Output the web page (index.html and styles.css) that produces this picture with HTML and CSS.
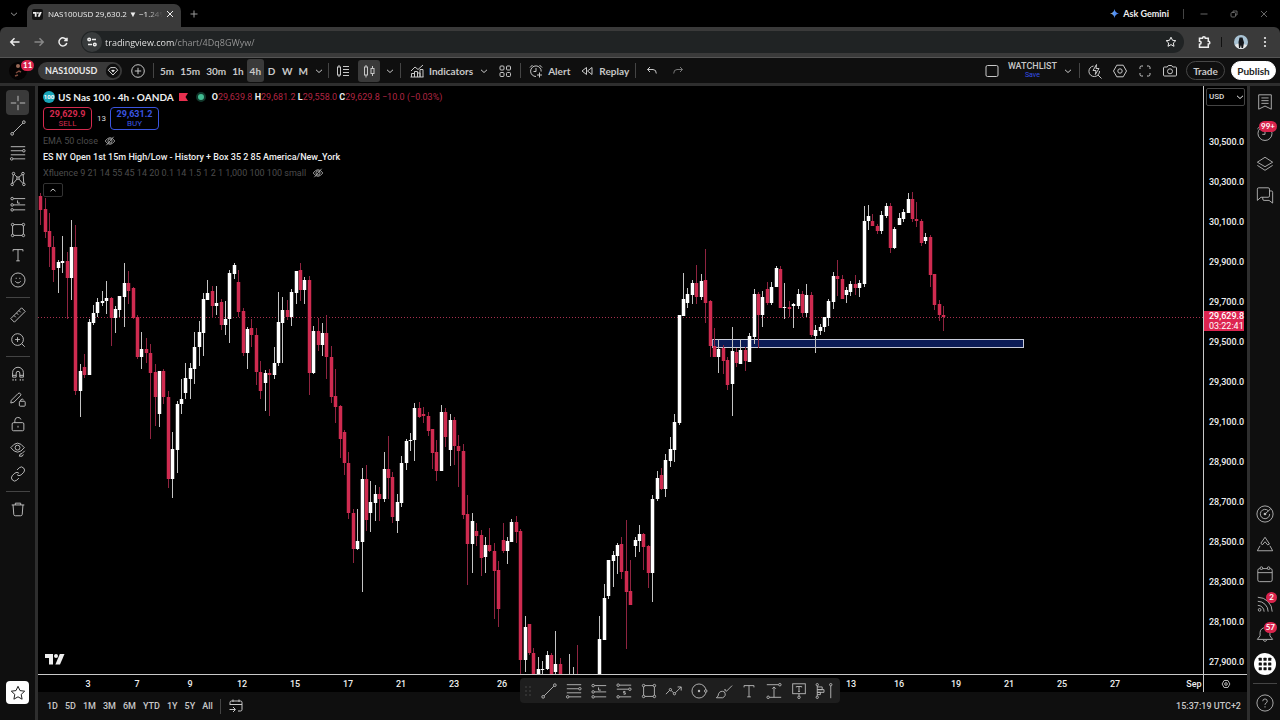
FILE: index.html
```html
<!DOCTYPE html>
<html lang="en">
<head>
    <meta charset="UTF-8">
    <meta name="viewport" content="width=device-width, initial-scale=1.0">
    <title>NAS100USD 29,630.2</title>
    <link rel="stylesheet" href="styles.css">
</head>
<body>
    <!-- Icon set -->
    <svg class="icon-set" aria-hidden="true">
        <symbol id="i-down" viewBox="0 0 10 10"><path d="M2 3.8l3 2.7 3-2.7"/></symbol>
        <symbol id="i-up" viewBox="0 0 10 10"><path d="M2.5 6.2L5 4l2.5 2.2"/></symbol>
        <symbol id="i-close" viewBox="0 0 10 10"><path d="M2 2l6 6M8 2l-6 6"/></symbol>
        <symbol id="i-plus" viewBox="0 0 10 10"><path d="M5 1.5v7M1.5 5h7"/></symbol>
        <symbol id="i-min" viewBox="0 0 10 10"><path d="M1.5 5h7"/></symbol>
        <symbol id="i-max" viewBox="0 0 10 10"><rect x="2" y="3.5" width="4.500" height="4.500" rx="1"/><path d="M4 3.300V2h4v4H6.800"/></symbol>
        <symbol id="i-back" viewBox="0 0 20 20"><path d="M14.500 10H6M9.500 6.300L5.800 10l3.700 3.700"/></symbol>
        <symbol id="i-forward" viewBox="0 0 20 20"><path d="M5.500 10H14M10.500 6.300l3.700 3.700-3.700 3.700"/></symbol>
        <symbol id="i-reload" viewBox="0 0 20 20"><path d="M13.500 8a4 4 0 1 0 .3 3M14 5.800V8.500h-2.800"/></symbol>
        <symbol id="i-tune" viewBox="0 0 20 20"><circle cx="7.200" cy="7.500" r="1.300"/><path d="M10 7.500h4M6 12.500h4"/><circle cx="12.800" cy="12.500" r="1.300"/></symbol>
        <symbol id="i-bookmark" viewBox="0 0 20 20"><path d="M10 5.200l1.500 3.100 3.300.4-2.500 2.300.7 3.300-3-1.700-3 1.700.7-3.300-2.500-2.300 3.300-.4z"/></symbol>
        <symbol id="i-star" viewBox="0 0 20 20"><path d="M10 3.300l2 4.300 4.700.6-3.500 3.200.9 4.800-4.100-2.400-4.100 2.400.9-4.800-3.500-3.200 4.700-.6z"/></symbol>
        <symbol id="i-puzzle" viewBox="0 0 20 20"><path d="M5.500 6.300h3q0-1.600 1.400-1.600t1.400 1.600h3v3q1.500 0 1.500 1.400T14.300 12v3.200H5.500v-3q1.600 0 1.600-1.500T5.500 9.300z"/></symbol>
        <symbol id="i-more" viewBox="0 0 20 20"><g class="solid"><circle cx="10" cy="6" r="1.100"/><circle cx="10" cy="10" r="1.100"/><circle cx="10" cy="14" r="1.100"/></g></symbol>
        <symbol id="i-gem" viewBox="0 0 20 20"><circle class="disc" cx="10" cy="10" r="8"/><path d="M7.300 6.200h5.400l2.500 2.900-5.200 5.400-5.200-5.400z"/><path class="solid" d="M10 11.700L7.900 9.300q1-1.400 2.100-.3 1.100-1.100 2.100.3z"/></symbol>
        <symbol id="i-pluscircle" viewBox="0 0 20 20"><circle cx="10" cy="10" r="6.300"/><path d="M10 6.800v6.400M6.800 10h6.400"/></symbol>
        <symbol id="i-bars" viewBox="0 0 20 20"><rect x="4.500" y="6" width="3" height="8"/><path d="M6 4v2M6 14v2M10 5.500h6M10 8.500h6M10 11.500h6M10 14.500h6"/></symbol>
        <symbol id="i-candles" viewBox="0 0 20 20"><rect x="5.500" y="6" width="3" height="8"/><rect x="12" y="7.500" width="3" height="5"/><path d="M7 4v2M7 14v2.500M13.500 5V7.500M13.500 12.500V15"/></symbol>
        <symbol id="i-indicators" viewBox="0 0 20 20"><path d="M4 10l4-4 3 2.500 5-4.500M4.500 16v-3.500h3V16M7.500 16v-5.500h3V16M10.500 16v-4h2.500V16M13 16V8.500h3V16M3.500 16h13"/></symbol>
        <symbol id="i-layouts" viewBox="0 0 20 20"><rect x="5" y="5" width="4" height="4" rx="1"/><rect x="11.500" y="5" width="4" height="4" rx="1"/><rect x="5" y="11.500" width="4" height="4" rx="1"/><rect x="11.500" y="11.500" width="4" height="4" rx="1"/></symbol>
        <symbol id="i-alarm" viewBox="0 0 20 20"><path d="M15.200 10.500A5.300 5.300 0 1 0 10 15.500M10 7v3.500H7.500M4 6.500l2.500-2.500M13.500 4L16 6.500M13.500 11.500v5M11 14h5"/></symbol>
        <symbol id="i-replay" viewBox="0 0 20 20"><path d="M9.500 6.500v7L5 10zM15 6.500v7L10.500 10z"/></symbol>
        <symbol id="i-undo" viewBox="0 0 20 20"><path d="M8 6L5.500 8.500 8 11M5.500 8.500H11q3.300 0 3.300 4"/></symbol>
        <symbol id="i-redo" viewBox="0 0 20 20"><path d="M12 6l2.500 2.500L12 11M14.500 8.500H9q-3.300 0-3.300 4"/></symbol>
        <symbol id="i-square" viewBox="0 0 20 20"><rect x="4" y="4.500" width="12" height="11" rx="1.500"/></symbol>
        <symbol id="i-quick" viewBox="0 0 20 20"><path d="M8.500 5A5.300 5.300 0 1 0 14.500 10M13 14l3.500 3.500M11.500 3.500L8 9.500h3l-.7 4 3.700-6h-3z"/></symbol>
        <symbol id="i-hex" viewBox="0 0 20 20"><path d="M6.800 4.200h6.400L16.500 10l-3.300 5.800H6.800L3.500 10z"/><circle cx="10" cy="10" r="2.200"/></symbol>
        <symbol id="i-full" viewBox="0 0 20 20"><path d="M5 8V6.500Q5 5 6.500 5H8M12 5h1.500Q15 5 15 6.500V8M15 12v1.500q0 1.500-1.500 1.500H12M8 15H6.500Q5 15 5 13.500V12"/></symbol>
        <symbol id="i-camera" viewBox="0 0 20 20"><path d="M4.500 6h2.800l1-1.500h3.400l1 1.500h2.800q1 0 1 1v7q0 1-1 1h-11q-1 0-1-1V7q0-1 1-1z"/><circle cx="10" cy="10.300" r="2.500"/></symbol>
        <symbol id="i-cross" viewBox="0 0 20 20"><path d="M10 2v6M10 12v6M2 10h6M12 10h6"/></symbol>
        <symbol id="i-line" viewBox="0 0 20 20"><circle cx="3.500" cy="16.500" r="1.500"/><circle cx="16.500" cy="3.500" r="1.500"/><path d="M4.600 15.400L15.400 4.600"/></symbol>
        <symbol id="i-fib" viewBox="0 0 20 20"><path d="M2 3h16M2 7.500h13M2 12h16M4.500 16.500H18"/><circle cx="16.500" cy="7.500" r="1.400"/><circle cx="3" cy="16.500" r="1.400"/></symbol>
        <symbol id="i-pattern" viewBox="0 0 20 20"><circle cx="5" cy="4" r="1.400"/><circle cx="15.500" cy="4" r="1.400"/><circle cx="10" cy="9" r="1.400"/><circle cx="3.500" cy="16" r="1.400"/><circle cx="16.500" cy="16" r="1.400"/><path d="M4.800 5.400L3.700 14.600M15.700 5.400l.7 9.200M6 5l3 3M14.500 5l-3.500 3M4.500 15L9 10M15.500 15L11 10"/></symbol>
        <symbol id="i-long" viewBox="0 0 20 20"><circle cx="3.500" cy="4" r="1.400"/><circle cx="3.500" cy="11" r="1.400"/><circle cx="3.500" cy="16.500" r="1.400"/><path d="M5 4h13M5 11h13M5 16.500h13M9.500 6v3H12"/></symbol>
        <symbol id="i-short" viewBox="0 0 20 20"><circle cx="3.500" cy="3.500" r="1.400"/><circle cx="16.500" cy="8" r="1.400"/><circle cx="3.500" cy="16.500" r="1.400"/><path d="M5 3.500h13M2 8h13M5 16.500h13M11.500 10.500h-2v1.500h2v1.500h-2"/></symbol>
        <symbol id="i-rect" viewBox="0 0 20 20"><circle cx="4" cy="4" r="1.400"/><circle cx="16" cy="4" r="1.400"/><circle cx="4" cy="16" r="1.400"/><circle cx="16" cy="16" r="1.400"/><path d="M5.400 4h9.200M5.400 16h9.200M4 5.400v9.200M16 5.400v9.200"/></symbol>
        <symbol id="i-text" viewBox="0 0 20 20"><path d="M4.500 6V4h11v2M10 4v12.500M8 16.500h4"/></symbol>
        <symbol id="i-smile" viewBox="0 0 20 20"><circle cx="10" cy="10" r="7.800"/><path d="M7 11.500q3 3.500 6 0M8 7.500v1.300M12 7.500v1.300"/></symbol>
        <symbol id="i-ruler" viewBox="0 0 20 20"><path d="M2 14L14 2l4 4L6 18zM5.500 10.500l2 2M8.300 7.700l2 2M11 5l2 2"/></symbol>
        <symbol id="i-zoomin" viewBox="0 0 20 20"><circle cx="9.500" cy="9.500" r="6.500"/><path d="M14.200 14.200l3.300 3.300M9.500 6.800v5.400M6.800 9.500h5.400"/></symbol>
        <symbol id="i-magnet" viewBox="0 0 20 20"><path d="M4 13.500V8.500a6 6 0 0 1 12 0v5h-4V9a2 2 0 0 0-4 0v4.500zM4.500 15.500v2M7.500 15.500v2M12.500 15.500v2M15.500 15.500v2M4 11.500h4M12 11.500h4"/></symbol>
        <symbol id="i-pencil" viewBox="0 0 20 20"><path d="M2.500 11.500L10 4q1.300-1.300 2.600 0t0 2.500L5.500 13.500 2 14.500z"/><rect x="11.500" y="12.500" width="6.500" height="5.500" rx="1"/><path d="M13 12.500v-1.500q1.700-2 3.200 0"/></symbol>
        <symbol id="i-lock" viewBox="0 0 20 20"><rect x="3.500" y="8.500" width="13" height="9" rx="1.500"/><path d="M6.500 8.500V6a3.500 3.500 0 0 1 6.800-1M10 12v2"/></symbol>
        <symbol id="i-eye" viewBox="0 0 20 20"><path d="M2 8.500q7.500-10 15 0-7.500 10-15 0z"/><circle cx="9.500" cy="8.500" r="2.700"/><path d="M11.500 18q0-3 3-3l3-3M11.500 18q4 1 4.500-2"/></symbol>
        <symbol id="i-link" viewBox="0 0 20 20"><path d="M9 5.500l2.500-2.500q2.500-2 4.700.3t.3 4.700l-3 3q-2.500 2-4.700-.3M11 14.500l-2.500 2.500q-2.500 2-4.700-.3t-.3-4.700l3-3q2.500-2 4.700.3"/></symbol>
        <symbol id="i-trash" viewBox="0 0 20 20"><path d="M3 5.500h14M7 5.500v-2h6v2M4.500 5.500l.8 10.500q.2 1.500 1.700 1.500h6q1.500 0 1.700-1.500l.8-10.500"/></symbol>
        <symbol id="i-list" viewBox="0 0 20 20"><path d="M3 2h14v16l-7-3.500L3 18zM6 5.500h8M6 8.500h8M6 11.500h8"/></symbol>
        <symbol id="i-clock" viewBox="0 0 20 20"><circle cx="10" cy="10.500" r="7.800"/><path d="M10 6.500v5H7M1.500 5.500l3-3"/></symbol>
        <symbol id="i-layers" viewBox="0 0 20 20"><path d="M10 2.500L18.500 8 10 13 1.500 8zM1.500 11.500l8.500 5.500 8.500-5.500"/></symbol>
        <symbol id="i-chat" viewBox="0 0 20 20"><path d="M3 2h10.500Q15 2 15 3.500v7.500q0 1.500-1.500 1.500H5.500L1.500 16V3.500Q1.500 2 3 2zM15 5.500h2q1.500 0 1.500 1.500v12L14.500 16H9q-1.500 0-1.500-1.500v-2"/></symbol>
        <symbol id="i-radar" viewBox="0 0 20 20"><circle cx="10" cy="10" r="9"/><path d="M13.800 6.500A5.200 5.200 0 1 0 15.200 10M10 10l6.500-6"/><circle class="solid" cx="10" cy="10" r="1.500"/></symbol>
        <symbol id="i-pine" viewBox="0 0 20 20"><path d="M5.500 9L10 2.500 15 10l-2 1-3-3.500-3 3.500zM4.500 12L1.500 17.500h17L15.500 12"/></symbol>
        <symbol id="i-calendar" viewBox="0 0 20 20"><rect x="2" y="4" width="16" height="14.500" rx="2"/><path d="M2 8.500h16"/><circle class="knob-dark" cx="6" cy="3.500" r="1.500"/><circle class="knob-dark" cx="14" cy="3.500" r="1.500"/></symbol>
        <symbol id="i-feed" viewBox="0 0 20 20"><circle cx="4" cy="16.500" r="1.500"/><path d="M2 11.500a7 7 0 0 1 7 7M2 7A11.500 11.500 0 0 1 13.500 18.500M2 2.500a16 16 0 0 1 16 16"/></symbol>
        <symbol id="i-bell" viewBox="0 0 20 20"><path d="M1.500 16L4.500 12V8.500a5.500 5.500 0 0 1 11 0V12l3 4zM8 17q2 2.500 4 0"/></symbol>
        <symbol id="i-apps" viewBox="0 0 20 20"><g class="solid"><rect x="3" y="3" width="3.500" height="3.500" rx=".5"/><rect x="8.300" y="3" width="3.500" height="3.500" rx=".5"/><rect x="13.500" y="3" width="3.500" height="3.500" rx=".5"/><rect x="3" y="8.300" width="3.500" height="3.500" rx=".5"/><rect x="8.300" y="8.300" width="3.500" height="3.500" rx=".5"/><rect x="13.500" y="8.300" width="3.500" height="3.500" rx=".5"/><rect x="3" y="13.500" width="3.500" height="3.500" rx=".5"/><rect x="8.300" y="13.500" width="3.500" height="3.500" rx=".5"/><rect x="13.500" y="13.500" width="3.500" height="3.500" rx=".5"/></g></symbol>
        <symbol id="i-help" viewBox="0 0 20 20"><circle cx="10" cy="10" r="9"/><path d="M7.500 8q0-2.500 2.500-2.500T12.500 8q0 1.300-1.300 2T10 12M10 13.500v1.500"/></symbol>
        <symbol id="i-hidden" viewBox="0 0 20 20"><path d="M2 10q8-11 16 0-8 11-16 0zM16 3L4 17"/><circle cx="10" cy="10" r="3.500"/></symbol>
        <symbol id="i-goto" viewBox="0 0 20 20"><path d="M4 9V6.500Q4 5 5.500 5h9Q16 5 16 6.500v7q0 1.500-1.500 1.500H12M4 8.500h12M7 3.500V6M13 3.500V6M3.500 13.500H9M7 11l2.500 2.500L7 16"/></symbol>
        <symbol id="i-path" viewBox="0 0 20 20"><circle cx="6" cy="8.500" r="1.300"/><circle cx="10.500" cy="13" r="1.300"/><path d="M1 13.500L5 9.500M7 9.500l2.500 2.500M11.500 12L18 5.500M14 5.500h4v4"/></symbol>
        <symbol id="i-circle" viewBox="0 0 20 20"><circle cx="10" cy="10" r="7.800"/><circle class="solid" cx="10" cy="10" r="1.300"/><circle class="knob" cx="17.500" cy="10" r="1.400"/></symbol>
        <symbol id="i-brush" viewBox="0 0 20 20"><path d="M1.500 17.500q2.500-1.500 2.500-4.500 2-4 6.500-2 2.500 4.500-2 6.500zM11 9.500q-.5-3.500 1.500 1L19 4"/></symbol>
        <symbol id="i-range" viewBox="0 0 20 20"><circle cx="16.500" cy="3" r="1.400"/><circle cx="3.500" cy="17" r="1.400"/><path d="M2 3h13M5 17h13M10 5.500V17M8 7.500l2-2 2 2"/></symbol>
        <symbol id="i-note" viewBox="0 0 20 20"><rect x="3" y="2" width="14" height="11"/><circle cx="10" cy="17" r="1.400"/><path d="M7 6V5h6v1M10 5v5.500M9 10.500h2M10 13v2.500"/></symbol>
        <symbol id="i-volume" viewBox="0 0 20 20"><circle cx="2.500" cy="3" r="1.300"/><circle cx="2.500" cy="17" r="1.300"/><circle cx="17.500" cy="3" r="1.300"/><path d="M2.500 4.300v11.400M2.500 5.500h5.500v3H2.500M2.500 8.500H10v3H2.500M2.500 11.500H6v2.500H2.500M17.500 4.300V18"/></symbol>
        <symbol id="i-grip" viewBox="0 0 10 20"><g class="solid"><circle cx="3" cy="6" r=".7"/><circle cx="7" cy="6" r=".7"/><circle cx="3" cy="10" r=".7"/><circle cx="7" cy="10" r=".7"/><circle cx="3" cy="14" r=".7"/><circle cx="7" cy="14" r=".7"/></g></symbol>
        <symbol id="i-tv" viewBox="0 0 20 11"><g class="solid"><path d="M0 0h8v10.500H4V4H0z"/><circle cx="11" cy="2" r="2"/><path d="M14.800 0h4.700L15 10.500h-4.600z"/></g></symbol>
    </svg>

    <!-- Browser tab strip -->
    <div class="tab-strip">
        <button class="tab-search" aria-label="Search tabs"><svg class="icon-sm"><use href="#i-down"/></svg></button>
        <div class="tab">
            <span class="favicon"><svg><use href="#i-tv"/></svg></span>
            <span class="tab-title">NAS100USD 29,630.2 ▼ −1.24%</span>
            <button aria-label="Close tab"><svg class="icon-sm"><use href="#i-close"/></svg></button>
        </div>
        <button class="new-tab" aria-label="New tab"><svg class="icon-sm"><use href="#i-plus"/></svg></button>
        <div class="window-controls">
            <button class="gemini">
                <svg viewBox="0 0 10 10"><defs><linearGradient id="gem"><stop offset="0" stop-color="#f2b84b"/><stop offset=".35" stop-color="#5b9df5"/><stop offset="1" stop-color="#3f6fe8"/></linearGradient></defs><path fill="url(#gem)" d="M5 0q.6 4.400 5 5-4.400.6-5 5-.6-4.400-5-5 4.400-.6 5-5z"/></svg>
                Ask Gemini
            </button>
            <span class="divider"></span>
            <button aria-label="Minimize"><svg class="icon-sm"><use href="#i-min"/></svg></button>
            <button aria-label="Restore"><svg class="icon-sm"><use href="#i-max"/></svg></button>
            <button aria-label="Close"><svg class="icon-sm"><use href="#i-close"/></svg></button>
        </div>
    </div>

    <!-- Browser address row -->
    <div class="address-row">
        <button aria-label="Back"><svg class="icon bold"><use href="#i-back"/></svg></button>
        <button class="dim" aria-label="Forward"><svg class="icon bold"><use href="#i-forward"/></svg></button>
        <button aria-label="Reload"><svg class="icon bold"><use href="#i-reload"/></svg></button>
        <div class="omnibox">
            <button class="site-info" aria-label="Site information"><svg class="icon bold"><use href="#i-tune"/></svg></button>
            <input type="text" aria-label="Address" value="tradingview.com/chart/4Dq8GWyw/">
            <button aria-label="Bookmark"><svg class="icon"><use href="#i-bookmark"/></svg></button>
        </div>
        <button aria-label="Extensions"><svg class="icon bold"><use href="#i-puzzle"/></svg></button>
        <span class="divider dark"></span>
        <button class="profile" aria-label="Profile"><svg viewBox="0 0 14 14"><circle cx="7" cy="7" r="7" fill="#a9c3d4"/><path d="M1 10q3-3 12 0-2 4-6 4t-6-4z" fill="#e8e8e8"/><path d="M5.500 2.500h3l1.500 5-1 5.500h-1.500L7 10l-1 3H5l-.5-6z" fill="#15181d"/></svg></button>
        <button aria-label="Menu"><svg class="icon"><use href="#i-more"/></svg></button>
    </div>

    <!-- Chart header -->
    <div class="header">
        <button class="avatar" aria-label="Account">
            <svg viewBox="0 0 18 18"><circle cx="9" cy="9" r="9" fill="#050303"/><circle cx="9" cy="4" r="2" fill="#9a6a58"/><path d="M7 11l3-2 2 1M6 14l3-1" stroke="#7d4a3c" stroke-width="1.500" fill="none"/></svg>
            <span class="badge">11</span>
        </button>
        <button class="symbol">NAS100USD <svg class="icon"><use href="#i-gem"/></svg></button>
        <button class="add" aria-label="Compare"><svg class="icon"><use href="#i-pluscircle"/></svg></button>
        <span class="divider"></span>
        <div class="intervals">
            <button>5m</button><button>15m</button><button>30m</button><button>1h</button><button class="active">4h</button><button>D</button><button>W</button><button>M</button>
            <button class="more" aria-label="More intervals"><svg class="icon-sm"><use href="#i-down"/></svg></button>
        </div>
        <span class="divider"></span>
        <button class="bar-style" aria-label="Settings"><svg class="icon"><use href="#i-bars"/></svg></button>
        <button class="candle-type active" aria-label="Candles"><svg class="icon"><use href="#i-candles"/></svg></button>
        <button class="chart-more" aria-label="Chart type"><svg class="icon-sm"><use href="#i-down"/></svg></button>
        <span class="divider"></span>
        <button class="labelled indicators"><svg class="icon"><use href="#i-indicators"/></svg>Indicators</button>
        <button class="indicators-more" aria-label="Favorite indicators"><svg class="icon-sm"><use href="#i-down"/></svg></button>
        <button class="templates" aria-label="Templates"><svg class="icon"><use href="#i-layouts"/></svg></button>
        <span class="divider"></span>
        <button class="labelled"><svg class="icon"><use href="#i-alarm"/></svg>Alert</button>
        <button class="labelled replay"><svg class="icon"><use href="#i-replay"/></svg>Replay</button>
        <span class="divider"></span>
        <button class="step" aria-label="Undo"><svg class="icon"><use href="#i-undo"/></svg></button>
        <button class="step dim" aria-label="Redo"><svg class="icon"><use href="#i-redo"/></svg></button>
        <div class="header-right">
            <button aria-label="Layout"><svg class="icon"><use href="#i-square"/></svg></button>
            <button class="watchlist">WATCHLIST<small>Save</small></button>
            <button class="layout-more" aria-label="Layouts"><svg class="icon-sm"><use href="#i-down"/></svg></button>
            <span class="divider"></span>
            <button class="tool" aria-label="Quick search"><svg class="icon"><use href="#i-quick"/></svg></button>
            <button class="tool" aria-label="Chart settings"><svg class="icon"><use href="#i-hex"/></svg></button>
            <button class="tool" aria-label="Fullscreen"><svg class="icon"><use href="#i-full"/></svg></button>
            <button class="tool" aria-label="Snapshot"><svg class="icon"><use href="#i-camera"/></svg></button>
            <button class="trade">Trade</button>
            <button class="publish">Publish</button>
        </div>
    </div>

    <div class="workspace">
        <!-- Drawing tools -->
        <div class="left-bar">
            <div class="tools tools-draw">
                <button class="active" aria-label="Cross"><svg class="icon"><use href="#i-cross"/></svg></button>
                <button aria-label="Trend line"><svg class="icon"><use href="#i-line"/></svg></button>
                <button aria-label="Fib retracement"><svg class="icon"><use href="#i-fib"/></svg></button>
                <button aria-label="Patterns"><svg class="icon"><use href="#i-pattern"/></svg></button>
                <button aria-label="Long position"><svg class="icon"><use href="#i-long"/></svg></button>
                <button aria-label="Rectangle"><svg class="icon"><use href="#i-rect"/></svg></button>
                <button aria-label="Text"><svg class="icon"><use href="#i-text"/></svg></button>
                <button aria-label="Icons"><svg class="icon"><use href="#i-smile"/></svg></button>
            </div>
            <hr>
            <div class="tools tools-measure">
                <button aria-label="Measure"><svg class="icon"><use href="#i-ruler"/></svg></button>
                <button aria-label="Zoom in"><svg class="icon"><use href="#i-zoomin"/></svg></button>
            </div>
            <hr>
            <div class="tools tools-lock">
                <button aria-label="Magnet"><svg class="icon"><use href="#i-magnet"/></svg></button>
                <button aria-label="Stay in drawing mode"><svg class="icon"><use href="#i-pencil"/></svg></button>
                <button aria-label="Lock drawings"><svg class="icon"><use href="#i-lock"/></svg></button>
                <button aria-label="Hide drawings"><svg class="icon"><use href="#i-eye"/></svg></button>
                <button aria-label="Sync drawings"><svg class="icon"><use href="#i-link"/></svg></button>
            </div>
            <hr>
            <div class="tools tools-trash">
                <button aria-label="Remove"><svg class="icon"><use href="#i-trash"/></svg></button>
            </div>
            <button class="favorites" aria-label="Favorites toolbar"><svg class="icon"><use href="#i-star"/></svg></button>
        </div>

        <div class="center">
            <div class="chart-row">
                <div class="chart">
                    <svg class="plot" id="plot"></svg>
                    <div class="legend">
                        <div class="legend-title">
                            <span class="logo">100</span>
                            <strong>US Nas 100 · 4h · OANDA</strong>
                            <svg class="flag" viewBox="0 0 9 8"><path d="M0 0h9L6.500 4 9 8H0z" fill="#e8304f"/></svg>
                            <span class="market"></span>
                            <span class="ohlc"><b>O</b>29,639.8 <b>H</b>29,681.2 <b>L</b>29,558.0 <b>C</b>29,629.8 −10.0 (−0.03%)</span>
                        </div>
                        <div class="quotes">
                            <button class="sell">29,629.9<small>SELL</small></button>
                            <span>13</span>
                            <button class="buy">29,631.2<small>BUY</small></button>
                        </div>
                        <div class="study off">EMA 50 close <svg class="icon-eye"><use href="#i-hidden"/></svg></div>
                        <div class="study">ES NY Open 1st 15m High/Low - History + Box 35 2 85 America/New_York</div>
                        <div class="study off">Xfluence 9 21 14 55 45 14 20 0.1 14 1.5 1 2 1 1,000 100 100 small <svg class="icon-eye"><use href="#i-hidden"/></svg></div>
                        <button class="collapse" aria-label="Hide legend"><svg class="icon-sm"><use href="#i-up"/></svg></button>
                    </div>
                    <svg class="watermark"><use href="#i-tv"/></svg>
                </div>
                <div class="price-axis">
                    <div class="currency">
                        <select aria-label="Currency"><option>USD</option></select>
                        <svg class="icon-sm"><use href="#i-down"/></svg>
                    </div>
                    <div class="prices">
                        <span>30,500.0</span><span>30,300.0</span><span>30,100.0</span><span>29,900.0</span><span>29,700.0</span><span>29,500.0</span><span>29,300.0</span><span>29,100.0</span><span>28,900.0</span><span>28,700.0</span><span>28,500.0</span><span>28,300.0</span><span>28,100.0</span><span>27,900.0</span>
                    </div>
                    <div class="last-price">29,629.8<span>03:22:41</span></div>
                </div>
            </div>
            <div class="time-row">
                <svg class="time-axis" id="timeAxis"></svg>
                <button class="axis-settings" aria-label="Axis settings"><svg class="icon-eye"><use href="#i-hex"/></svg></button>
            </div>
            <div class="footer">
                <button>1D</button><button>5D</button><button>1M</button><button>3M</button><button>6M</button><button>YTD</button><button>1Y</button><button>5Y</button><button>All</button>
                <span class="divider"></span>
                <button aria-label="Go to date"><svg class="icon"><use href="#i-goto"/></svg></button>
                <button class="clock">15:37:19 UTC+2</button>
            </div>
        </div>

        <!-- Widgets -->
        <div class="right-bar">
            <div class="right-top">
                <button aria-label="Watchlist"><svg class="icon"><use href="#i-list"/></svg></button>
                <button aria-label="Alerts"><svg class="icon"><use href="#i-clock"/></svg><span class="badge">99+</span></button>
                <button aria-label="Object tree"><svg class="icon"><use href="#i-layers"/></svg></button>
                <button aria-label="Chats"><svg class="icon"><use href="#i-chat"/></svg></button>
            </div>
            <div class="right-bottom">
                <button aria-label="Screeners"><svg class="icon"><use href="#i-radar"/></svg></button>
                <button aria-label="Pine"><svg class="icon"><use href="#i-pine"/></svg></button>
                <button aria-label="Calendars"><svg class="icon"><use href="#i-calendar"/></svg></button>
                <button aria-label="Feed"><svg class="icon"><use href="#i-feed"/></svg><span class="badge">2</span></button>
                <button aria-label="Notifications"><svg class="icon"><use href="#i-bell"/></svg><span class="badge">57</span></button>
                <button class="apps" aria-label="Products"><svg class="icon"><use href="#i-apps"/></svg></button>
                <hr>
                <button aria-label="Help"><svg class="icon"><use href="#i-help"/></svg></button>
            </div>
        </div>
    </div>

    <!-- Floating favorites toolbar -->
    <div class="float-bar">
        <svg class="grip"><use href="#i-grip"/></svg>
        <button aria-label="Trend line"><svg class="icon"><use href="#i-line"/></svg></button>
        <button aria-label="Fib retracement"><svg class="icon"><use href="#i-fib"/></svg></button>
        <button aria-label="Long position"><svg class="icon"><use href="#i-long"/></svg></button>
        <button aria-label="Short position"><svg class="icon"><use href="#i-short"/></svg></button>
        <button aria-label="Rectangle"><svg class="icon"><use href="#i-rect"/></svg></button>
        <button aria-label="Path"><svg class="icon"><use href="#i-path"/></svg></button>
        <button aria-label="Circle"><svg class="icon"><use href="#i-circle"/></svg></button>
        <button aria-label="Brush"><svg class="icon"><use href="#i-brush"/></svg></button>
        <button aria-label="Text"><svg class="icon"><use href="#i-text"/></svg></button>
        <button aria-label="Price range"><svg class="icon"><use href="#i-range"/></svg></button>
        <button aria-label="Note"><svg class="icon"><use href="#i-note"/></svg></button>
        <button aria-label="Volume profile"><svg class="icon"><use href="#i-volume"/></svg></button>
    </div>

    <script src="chart.js"></script>
</body>
</html>
```
FILE: styles.css
```css
* {
    box-sizing: border-box;
}
body {
    margin: 0;
    height: 100vh;
    display: flex;
    flex-direction: column;
    overflow: hidden;
    background: #000;
    color: #c8c8c8;
    font-family: Lato, "Open Sans", sans-serif;
    font-size: 10px;
    line-height: 12px;
}
button {
    display: flex;
    align-items: center;
    justify-content: center;
    flex: none;
    padding: 0;
    border: 0;
    background: none;
    color: inherit;
    font: inherit;
    font-weight: 700;
}
hr {
    width: 24px;
    height: 1px;
    margin: 4px auto;
    border: 0;
    background: #444;
}
svg {
    flex: none;
    fill: none;
    stroke: currentColor;
    stroke-width: 1;
}
.icon-set {
    position: absolute;
    width: 0;
    height: 0;
}
.solid {
    fill: currentColor;
    stroke: none;
}
.disc {
    fill: #0f0f0f;
    stroke: none;
}
.knob {
    fill: #1e1e1e;
}
.knob-dark {
    fill: #0f0f0f;
}
.icon {
    width: 20px;
    height: 20px;
}
.icon-sm {
    width: 10px;
    height: 10px;
}
.icon-eye {
    width: 12px;
    height: 12px;
    stroke-width: 1.5;
}
.bold {
    stroke-width: 1.5;
}
.dim {
    color: #777;
}
.divider {
    flex: none;
    width: 1px;
    height: 15px;
    background: #444;
}
.badge {
    position: absolute;
    min-width: 11px;
    height: 11px;
    padding: 0 2px;
    border-radius: 6px;
    background: #d9244c;
    color: #fff;
    font-size: 8px;
    line-height: 11px;
}

/* Browser */
.tab-strip {
    flex: none;
    display: flex;
    align-items: center;
    height: 27px;
}
.tab-search {
    width: 27px;
    color: #999;
}
.tab {
    display: flex;
    align-items: center;
    align-self: flex-end;
    width: 154px;
    height: 23px;
    padding: 0 6px 3px 5px;
    border-radius: 7px 7px 0 0;
    background: #3a3a3a;
    color: #eee;
}
.favicon {
    display: flex;
    align-items: center;
    justify-content: center;
    width: 11px;
    height: 11px;
    margin-right: 5px;
    border-radius: 2px;
    background: #111;
}
.favicon svg {
    width: 9px;
    height: 5px;
}
.tab-title {
    flex: 1;
    overflow: hidden;
    margin-right: 2px;
    white-space: nowrap;
    font-size: 8px;
    font-family: "Open Sans", sans-serif;
    mask-image: linear-gradient(to right, #000 85%, transparent);
}
.new-tab {
    margin-left: 8px;
    color: #999;
}
.window-controls {
    display: flex;
    align-items: center;
    gap: 20px;
    margin-left: auto;
    padding-right: 11px;
    color: #666;
}
.gemini {
    gap: 4px;
    margin-right: -6px;
    color: #eee;
    font-size: 9px;
}
.gemini svg {
    width: 9px;
    height: 9px;
    stroke: none;
}
.window-controls .divider {
    height: 10px;
    margin-right: -5px;
}
.address-row {
    flex: none;
    display: flex;
    align-items: center;
    gap: 4px;
    height: 31px;
    padding: 0 5px;
    background: #3a3a3a;
    border-bottom: 1px solid #555;
    border-radius: 6px 6px 0 0;
    color: #eee;
}
.address-row .dim {
    color: #888;
}
.omnibox {
    flex: 1;
    display: flex;
    align-items: center;
    height: 22px;
    margin: 0 6px 0 4px;
    padding: 0 3px 0 1px;
    border-radius: 11px;
    background: #202324;
}
.omnibox input {
    flex: 1;
    min-width: 0;
    padding: 0;
    border: 0;
    outline: 0;
    background: linear-gradient(to right, #f2f2f2 69px, #999 69px) text;
    color: transparent;
    font-family: "Open Sans", sans-serif;
    font-size: 9px;
}
.site-info {
    margin-right: 3px;
    border-radius: 50%;
    background: #383b3c;
}
.address-row .dark {
    height: 10px;
    margin: 0 5px 0 3px;
    background: #111;
}
.profile svg {
    width: 14px;
    height: 14px;
    stroke: none;
}
.address-row button {
    min-width: 20px;
}

/* Header */
.header {
    flex: none;
    display: flex;
    align-items: center;
    height: 28px;
    padding: 0 4px 0 9px;
    background: #0f0f0f;
    border-bottom: 3px solid #2e2e2e;
}
.avatar {
    position: relative;
    margin-right: 11px;
}
.avatar > svg {
    width: 18px;
    height: 18px;
    stroke: none;
}
.avatar .badge {
    top: -2px;
    left: 12px;
}
.symbol {
    justify-content: space-between;
    width: 84px;
    height: 18px;
    padding-left: 7px;
    border-radius: 9px;
    background: #3a3a3a;
    color: #e8e8e8;
    font-size: 9px;
}
.symbol svg {
    width: 18px;
}
.add {
    margin: 0 5px 0 6px;
}
.intervals {
    display: flex;
    margin: 0 2px 0 3px;
}
.intervals button {
    min-width: 15px;
    height: 23px;
    padding: 0 3px;
    border-radius: 3px;
}
.intervals .more {
    padding: 0;
}
.header .active {
    background: #3a3a3a;
}
.bar-style {
    margin: 0 5px 0 4px;
}
.candle-type {
    width: 22px;
    height: 22px;
    border-radius: 3px;
}
.chart-more {
    margin: 0 5px;
}
.labelled {
    gap: 2px;
    margin: 0 5px;
}
.indicators {
    margin-right: 3px;
    margin-left: 6px;
}
.indicators-more {
    margin: 0 3px;
}
.templates {
    margin: 0 5px 0 3px;
}
.replay {
    margin-right: 6px;
    margin-left: 2px;
}
.step {
    margin-left: 6px;
}
.header-right {
    display: flex;
    align-items: center;
    margin-left: auto;
}
.watchlist {
    flex-direction: column;
    margin: 0 6px;
    font-family: Roboto, sans-serif;
    font-size: 9px;
    font-weight: 500;
    line-height: 10px;
}
.watchlist small {
    color: #3550e8;
    font-size: 7px;
    font-weight: 400;
    line-height: 9px;
}
.layout-more {
    margin-right: 6px;
}
.tool {
    margin-left: 5px;
}
.trade, .publish {
    width: 39px;
    height: 19px;
    margin-left: 6px;
    border: 1px solid #484848;
    border-radius: 10px;
}
.publish {
    width: 45px;
    border-color: #fff;
    background: #fff;
    color: #222;
}

/* Workspace */
.workspace {
    flex: 1;
    display: flex;
    min-height: 0;
}
.left-bar {
    flex: none;
    display: flex;
    flex-direction: column;
    width: 38px;
    padding: 4px 0 16px;
    background: #0f0f0f;
    border-right: 3px solid #2e2e2e;
}
.tools {
    display: flex;
    flex-direction: column;
    align-items: center;
}
.tools button {
    flex: 1;
    width: 23px;
    border-radius: 4px;
}
.tools .active {
    background: #3a3a3a;
}
.tools .icon {
    width: 18px;
    height: 18px;
}
.tools-draw {
    height: 203px;
}
.tools-measure {
    height: 50px;
}
.tools-lock {
    height: 126px;
}
.tools-trash {
    height: 25px;
}
.favorites {
    width: 23px;
    height: 23px;
    margin: auto auto 0;
    border-radius: 4px;
    background: #fff;
    color: #222;
}
.center {
    flex: 1;
    display: flex;
    flex-direction: column;
    min-width: 0;
    font-family: Roboto, sans-serif;
}
.chart-row {
    flex: 1;
    display: flex;
    min-height: 0;
    border-bottom: 1px solid #c8c8c8;
}
.chart {
    position: relative;
    flex: 1;
    min-width: 0;
}
.plot {
    position: absolute;
    width: 100%;
    height: 100%;
}
.up {
    fill: #fff;
    stroke: none;
}
.down {
    fill: #cf2b50;
    stroke: none;
}
.wick-up {
    stroke: #c4c4c4;
}
.wick-down {
    stroke: #8f2440;
}
.zone {
    fill: #0b1b55;
    stroke: #c8ccda;
}
.price-line {
    stroke: #a8304f;
    stroke-dasharray: 1 2;
}
.legend {
    position: relative;
    padding: 4px 0 0 5px;
}
.legend-title {
    display: flex;
    align-items: center;
    height: 14px;
    color: #eee;
    font-size: 10px;
    white-space: nowrap;
}
.legend-title strong {
    font-family: Lato, sans-serif;
}
.logo {
    width: 12px;
    height: 12px;
    margin-right: 3px;
    border-radius: 50%;
    background: #18a5b8;
    color: #fff;
    font-size: 6px;
    font-weight: 700;
    text-align: center;
}
.flag {
    width: 9px;
    height: 8px;
    margin: 0 8px 0 5px;
    stroke: none;
}
.market {
    width: 10px;
    height: 10px;
    margin-right: 6px;
    border: 2px solid #12372b;
    border-radius: 50%;
    background: #42bd92;
}
.ohlc {
    color: #b02643;
    font-size: 9px;
}
.ohlc b {
    color: #eee;
}
.quotes {
    display: flex;
    align-items: center;
    gap: 5px;
    margin: 3px 0;
    color: #ddd;
    font-size: 8px;
}
.quotes span {
    width: 8px;
    text-align: center;
}
.quotes button {
    flex-direction: column;
    width: 49px;
    height: 23px;
    border: 1px solid;
    border-radius: 4px;
    font-size: 9px;
    line-height: 10px;
}
.quotes small {
    font-size: 8px;
    font-weight: 400;
    line-height: 9px;
}
.sell {
    color: #d42a4e;
}
.buy {
    color: #3b55e0;
}
.study {
    display: flex;
    align-items: center;
    gap: 6px;
    height: 16px;
    color: #eee;
    font-size: 9px;
    font-weight: 500;
    white-space: nowrap;
}
.study.off {
    color: #4c4c4c;
    font-weight: 400;
}
.study svg {
    color: #aaa;
}
.collapse {
    width: 20px;
    height: 14px;
    margin-top: 2px;
    border: 1px solid #333;
    border-radius: 2px;
}
.watermark {
    position: absolute;
    bottom: 9px;
    left: 7px;
    width: 20px;
    height: 11px;
    color: #eee;
}
.price-axis {
    position: relative;
    flex: none;
    width: 44px;
    border-left: 1px solid #c8c8c8;
    color: #eee;
    font-size: 9px;
    font-weight: 500;
}
.currency {
    position: relative;
    margin: 2px 2px 0;
}
.currency select {
    display: block;
    width: 100%;
    height: 18px;
    padding: 0 2px;
    appearance: none;
    border: 1px solid #444;
    border-radius: 2px;
    background: #000;
    color: #ddd;
    font: inherit;
    font-size: 8px;
}
.currency svg {
    position: absolute;
    top: 4px;
    right: 0;
}
.prices {
    display: flex;
    flex-direction: column;
    padding: 16px 0 0 5px;
}
.prices span {
    height: 40px;
    line-height: 40px;
}
.last-price {
    position: absolute;
    top: 225px;
    left: 0;
    width: 40px;
    padding-left: 5px;
    background: #dd2450;
    color: #fff;
    line-height: 10px;
}
.last-price span {
    display: block;
    font-weight: 400;
}
.time-row {
    flex: none;
    display: flex;
    height: 17px;
}
.time-axis {
    flex: 1;
    min-width: 0;
    height: 17px;
    fill: #eee;
    stroke: none;
    font-size: 9px;
    font-weight: 500;
    text-anchor: middle;
}
.axis-settings {
    width: 44px;
    border-left: 1px solid #c8c8c8;
}
.footer {
    flex: none;
    display: flex;
    align-items: center;
    gap: 7px;
    height: 28px;
    padding: 0 6px 0 9px;
    background: #0f0f0f;
    font-size: 9px;
}
.footer button {
    font-weight: 500;
}
.footer .divider {
    margin-right: -2px;
}
.footer .clock {
    margin-left: auto;
}
.right-bar {
    flex: none;
    display: flex;
    flex-direction: column;
    align-items: center;
    width: 33px;
    background: #0f0f0f;
    border-left: 3px solid #2e2e2e;
    color: #b8b8b8;
}
.right-bar button {
    position: relative;
    width: 30px;
    height: 30px;
}
.right-bar .icon {
    width: 18px;
    height: 18px;
}
.right-bar .badge {
    top: 3px;
    right: 3px;
}
.right-top {
    display: flex;
    flex-direction: column;
    gap: 1px;
    padding-top: 1px;
}
.right-bottom {
    margin-top: auto;
    padding-bottom: 2px;
}
.right-bar .apps {
    width: 22px;
    height: 22px;
    margin: 4px auto 8px;
    border-radius: 50%;
    background: #fff;
    color: #111;
}

/* Floating toolbar */
.float-bar {
    position: absolute;
    bottom: 17px;
    left: 520px;
    display: flex;
    align-items: center;
    height: 25px;
    padding: 0 4px 0 3px;
    border-radius: 4px;
    background: #1e1e1e;
    color: #bbb;
}
.float-bar button {
    width: 25px;
}
.float-bar .icon {
    width: 18px;
    height: 18px;
}
.grip {
    width: 10px;
    height: 20px;
    margin-right: 3px;
    color: #555;
}
```
FILE: chart.js
```js
const SVG = 'http://www.w3.org/2000/svg';
const STEP = 4.404;
const FIRST = 2.6;
const TOP = 86;

// side (1 up, 0 down), high, body top, body bottom, low; null = off screen
const candles = [
    [0,193,196,210,225],[0,198,209,232,238],[0,213,231,247,267],[0,236,247,270,282],[1,260,262,268,293],
    [1,236,261,263,273],[0,252,261,278,319],[1,220,247,278,300],[0,225,247,391,395],[1,364,371,391,417],
    [0,354,367,375,378],[1,319,322,375,375],[1,305,313,323,325],[1,298,302,313,317],[1,291,301,303,306],
    [1,281,298,301,314],[0,297,298,318,346],[1,306,309,318,333],[1,296,296,310,317],[1,263,283,297,327],
    [0,271,283,291,304],[0,287,288,318,319],[0,315,317,357,359],[1,332,349,357,369],[0,338,349,353,363],
    [0,344,353,373,439],[0,364,372,397,426],[1,371,371,414,427],[0,369,371,397,404],[0,391,397,479,488],
    [1,432,449,479,498],[1,401,404,450,473],[1,379,399,404,414],[1,363,378,393,399],[1,363,368,379,399],
    [1,332,347,369,384],[1,321,332,347,366],[1,293,299,333,356],[1,280,293,300,300],[0,286,291,306,318],
    [1,286,303,306,315],[0,299,302,325,330],[1,301,319,325,335],[1,270,273,319,343],[1,263,265,274,279],
    [0,270,282,312,317],[0,308,311,353,356],[1,327,329,353,369],[0,319,328,335,347],[0,328,335,372,385],
    [0,361,372,391,399],[1,370,373,383,411],[0,369,373,375,416],[1,347,363,375,379],[1,292,322,363,366],
    [1,297,310,323,363],[0,300,310,317,320],[1,289,292,317,326],[1,271,271,293,304],[0,263,270,290,301],
    [1,277,280,290,304],[0,276,280,373,395],[1,326,331,373,374],[0,318,331,345,351],[1,323,333,345,356],
    [0,315,333,357,379],[0,346,357,397,403],[0,369,396,407,423],[0,405,406,439,458],[0,430,432,463,475],
    [0,452,463,513,519],[0,509,513,549,563],[1,509,541,549,550],[1,468,479,542,592],[0,465,479,520,531],
    [1,481,502,513,532],[1,485,494,503,521],[0,487,494,499,521],[1,452,469,499,502],[0,436,469,478,499],
    [0,472,477,517,523],[1,494,502,521,533],[1,456,463,503,507],[1,439,441,463,470],[1,433,440,441,451],
    [1,403,408,440,461],[0,402,408,417,418],[0,407,414,416,423],[0,412,416,431,436],[0,429,429,453,469],
    [0,440,452,471,481],[1,405,412,471,471],[0,408,412,437,447],[1,414,420,450,466],[0,417,420,446,465],
    [0,435,446,451,487],[0,444,451,515,519],[0,495,514,544,585],[1,513,521,544,573],[0,523,531,536,546],
    [0,530,535,558,576],[1,537,545,557,573],[0,528,545,551,552],[0,543,551,571,619],[0,561,570,609,627],
    [0,523,540,551,553],[1,537,541,551,564],[1,519,522,542,542],[0,516,522,532,543],[0,529,531,660,674],
    [1,616,627,660,672],[0,624,624,653,655],[0,648,653,674,674],[1,657,669,674,674],[1,661,669,670,674],
    [1,651,655,669,670],[0,653,655,674,674],[1,631,664,672,674],[0,658,664,674,674],null,
    [1,654,674,674,674],[1,667,674,674,674],[0,645,674,674,674],null,null,
    null,null,[1,616,639,674,674],[1,584,598,640,640],[1,560,560,596,599],
    [1,551,555,561,587],[1,543,545,556,574],[0,537,544,572,579],[0,520,571,592,649],[0,560,591,605,605],
    [1,537,540,546,557],[1,525,534,541,552],[0,533,534,547,570],[0,545,546,573,588],[1,495,499,573,602],
    [1,471,478,499,501],[0,468,475,489,490],[1,454,460,489,497],[1,437,449,461,467],[1,414,422,450,462],
    [1,315,315,423,425],[1,273,299,316,316],[1,288,294,303,308],[1,280,283,295,304],[0,265,283,297,304],
    [1,274,281,297,300],[0,249,280,303,323],[0,300,301,346,357],[0,328,346,357,357],[1,339,349,357,373],
    [0,345,348,361,374],[0,357,360,385,390],[1,327,351,384,416],[0,348,352,363,367],[1,339,350,364,364],
    [0,347,350,361,371],[1,333,336,362,362],[1,289,294,337,344],[0,292,294,315,348],[1,291,297,315,327],
    [0,282,289,303,305],[1,282,287,303,305],[1,266,268,287,287],[0,266,269,308,308],[1,283,307,308,319],
    [0,301,307,309,317],[1,303,304,306,328],[1,289,294,306,309],[0,291,294,313,317],[1,284,295,313,317],
    [0,292,295,335,337],[1,325,330,336,353],[1,324,327,331,335],[1,317,317,327,332],[1,299,301,318,326],
    [1,272,276,302,309],[0,260,276,279,296],[0,275,279,299,299],[1,287,290,295,303],[1,281,284,292,296],
    [0,275,284,288,295],[1,280,283,288,297],[1,206,221,284,287],[1,205,216,221,230],[0,214,221,226,226],
    [0,224,226,231,234],[1,211,215,231,234],[1,203,206,216,218],[0,203,206,248,253],[1,227,229,248,249],
    [1,213,218,225,225],[1,209,212,219,222],[1,193,199,213,213],[0,192,199,219,222],[0,202,219,221,227],
    [0,219,221,243,246],[1,233,237,241,244],[0,235,237,275,287],[0,274,274,305,310],[0,300,304,315,321],
    [0,306,315,317,331]
];

const days = [
    [50, '3'], [99, '7'], [152, '9'], [204, '12'], [257, '15'], [310, '17'], [363, '21'], [416, '23'],
    [464, '26'], [813, '13'], [861, '16'], [918, '19'], [971, '21'], [1024, '25'], [1077, '27'], [1156, 'Sep']
];

function add(parent, name, attrs) {
    const el = document.createElementNS(SVG, name);
    for (const key in attrs) {
        el.setAttribute(key, attrs[key]);
    }
    parent.appendChild(el);
    return el;
}

function drawChart() {
    const plot = document.getElementById('plot');
    add(plot, 'line', { class: 'price-line', x1: 0, x2: '100%', y1: 231.5, y2: 231.5 });
    add(plot, 'rect', { class: 'zone', x: 674.5, y: 253.5, width: 311, height: 8 });

    candles.forEach((candle, i) => {
        if (!candle) return;
        const [up, high, top, bottom, low] = candle;
        const x = FIRST + i * STEP;
        const wick = Math.floor(x) + 0.5;
        add(plot, 'line', { class: up ? 'wick-up' : 'wick-down', x1: wick, x2: wick, y1: high - TOP, y2: low - TOP });
        add(plot, 'rect', { class: up ? 'up' : 'down', x: wick - 1.75, y: top - TOP, width: 3.5, height: bottom - top });
    });
}

function drawDays() {
    const axis = document.getElementById('timeAxis');
    days.forEach(([x, label]) => {
        add(axis, 'text', { x: x, y: 12 }).textContent = label;
    });
}

drawChart();
drawDays();
```
